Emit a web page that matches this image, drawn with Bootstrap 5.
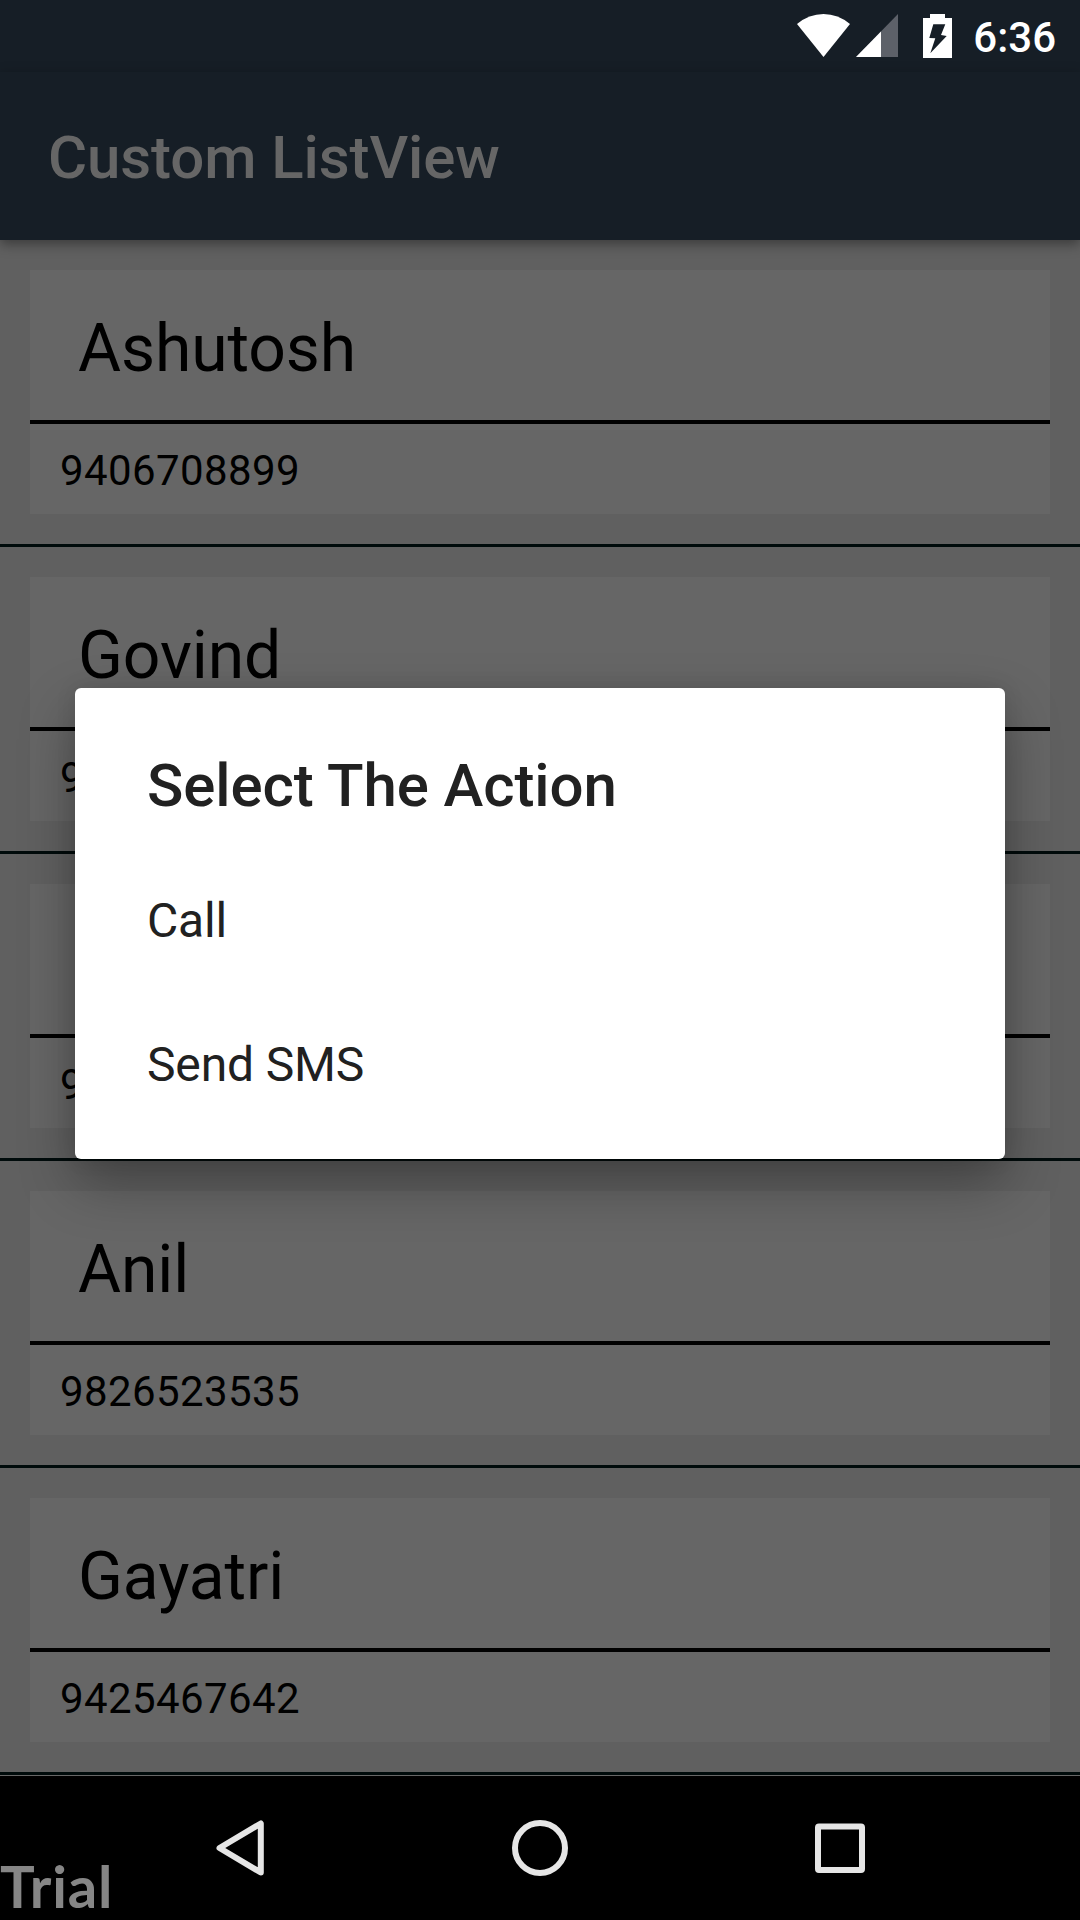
<!DOCTYPE html>
<html lang="en">
<head>
<meta charset="utf-8">
<meta name="viewport" content="width=device-width, initial-scale=1">
<title>Custom ListView</title>
<link href="https://cdn.jsdelivr.net/npm/bootstrap@5.3.0/dist/css/bootstrap.min.css" rel="stylesheet">
<style>
  body { font-family: Roboto, sans-serif; background: #000; color: #000; }
  .screen { width: 1080px; height: 1920px; background: #606060; }
  .status-bar { height: 72px; background: #161e26; padding-right: 24px; color: #fff; }
  .clock { font-size: 42px; line-height: 50px; font-weight: 500; padding-top: 13px; margin-left: 18px; }
  .app-bar { height: 168px; background: #161e26; padding: 50px 48px 0; box-shadow: 0 4px 12px rgba(0,0,0,.4); z-index: 1; }
  .app-title { font-size: 60px; line-height: 72px; font-weight: 500; color: #666; letter-spacing: -.1px; }
  .contact { padding: 30px; border-bottom: 3px solid #000b0b; height: 307px; }
  .contact-body { background: #666; }
  .contact-name { height: 154px; border-bottom: 4px solid #000; font-size: 66px; line-height: 78px; padding: 40px 48px 0; letter-spacing: -.1px; }
  .contact-phone { height: 90px; font-size: 42px; line-height: 50px; padding: 22px 30px 0; letter-spacing: .4px; }
  .edge-line { height: 1px; background: #666; }
  .nav-keys { height: 144px; background: #000; }
  .watermark { left: 0; bottom: -1px; font: 700 58px/70px Lato, sans-serif; letter-spacing: .8px; color: #868686; }
  .action-dialog { left: 75px; top: 688px; width: 930px; height: 471px; border-radius: 6px; background: #fff; color: #212121; z-index: 5;
    box-shadow: 0 24px 56px rgba(0,0,0,.32), 0 0 20px rgba(0,0,0,.1); }
  .dialog-title { font-size: 60px; line-height: 72px; font-weight: 500; padding: 62px 72px 27px; letter-spacing: -.1px; }
  .dialog-item { height: 144px; font-size: 48px; padding: 0 72px; letter-spacing: -.15px; }
</style>
<script src="https://cdn.jsdelivr.net/npm/bootstrap@5.3.0/dist/js/bootstrap.bundle.min.js"></script>
</head>
<body>
<div class="screen position-relative overflow-hidden d-flex flex-column">
  <div class="status-bar d-flex justify-content-end align-items-start flex-shrink-0">
    <svg width="160" height="72" viewBox="795 0 160 72" aria-hidden="true">
      <path fill="#fff" d="M797 24Q809 14 823.5 14T850 24L823.5 57Z"/>
      <path fill="#5d6169" d="M898 14V57H856Z"/>
      <path fill="#fff" d="M881 31.5V57H856Z"/>
      <path fill="#fff" fill-rule="evenodd" d="M930 14H945V18H952V58H923V18H930ZM933.3 24.3L929.3 38L935.3 38.3L930.3 53.3L946.7 36L941 35L945.3 24.3Z"/>
    </svg>
    <div class="clock">6:36</div>
  </div>
  <header class="app-bar d-flex align-items-start flex-shrink-0 position-relative">
    <div class="app-title">Custom ListView</div>
  </header>
  <main class="flex-shrink-0">
    <div class="contact"><div class="contact-body"><div class="contact-name">Ashutosh</div><div class="contact-phone">9406708899</div></div></div>
    <div class="contact"><div class="contact-body"><div class="contact-name">Govind</div><div class="contact-phone">9</div></div></div>
    <div class="contact"><div class="contact-body"><div class="contact-name">&nbsp;</div><div class="contact-phone">9</div></div></div>
    <div class="contact"><div class="contact-body"><div class="contact-name">Anil</div><div class="contact-phone">9826523535</div></div></div>
    <div class="contact"><div class="contact-body"><div class="contact-name">Gayatri</div><div class="contact-phone">9425467642</div></div></div>
  </main>
  <div class="edge-line flex-shrink-0"></div>
  <nav class="nav-keys flex-shrink-0">
    <svg class="d-block" width="1080" height="144" viewBox="0 1776 1080 144" fill="none" stroke="#e6e6e6" stroke-width="6" stroke-linejoin="round" aria-hidden="true">
      <path d="M260.800 1823.500V1872.500L219.500 1848Z"/>
      <circle cx="540" cy="1848" r="25"/>
      <rect x="818" y="1826.500" width="44" height="43.500" rx="1"/>
    </svg>
  </nav>
  <div class="watermark position-absolute">Trial</div>
  <div class="action-dialog position-absolute" role="dialog">
    <div class="dialog-title">Select The Action</div>
    <div class="dialog-item d-flex align-items-center">Call</div>
    <div class="dialog-item d-flex align-items-center">Send SMS</div>
  </div>
</div>
</body>
</html>
